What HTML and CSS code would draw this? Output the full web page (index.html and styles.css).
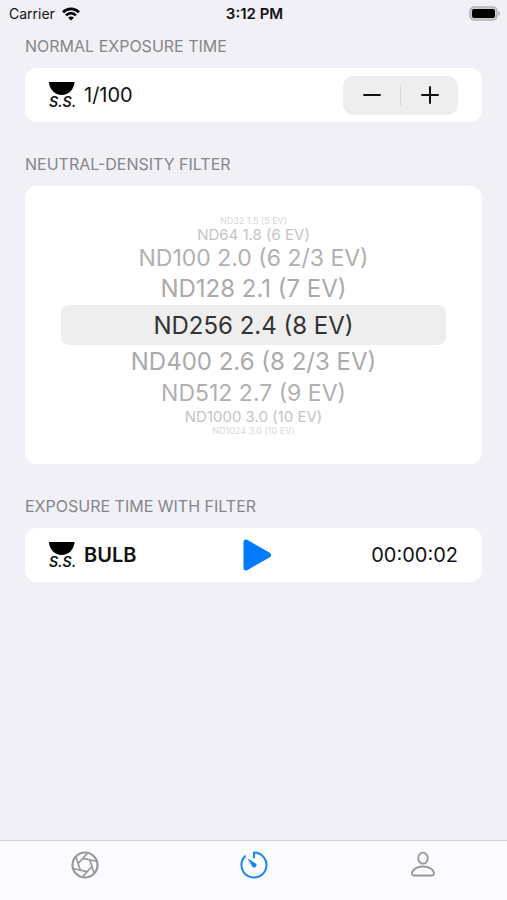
FILE: index.html
```html
<!DOCTYPE html>
<html lang="en">
<head>
    <meta charset="UTF-8">
    <meta name="viewport" content="width=device-width, initial-scale=1.0">
    <title>Exposure Timer</title>
    <link rel="stylesheet" href="styles.css">
</head>
<body>
<svg class="symbols" aria-hidden="true">
    <symbol id="shutter" viewBox="0 0 26 14">
        <path d="M0 0h25.500v1C24.500 8 19.500 13 12.700 13S1 8 0 1z"/>
    </symbol>
</svg>

<header class="status">
    <div class="carrier">
        <span>Carrier</span>
        <svg width="18" height="14" viewBox="0 0 18 14" fill="none" stroke="#000" stroke-width="2.600">
            <path d="M1 5.200c4.500-4.400 11.500-4.400 16 0"/>
            <path d="M4 8.300c2.800-2.800 7.200-2.800 10 0"/>
            <path d="M9 13.600l-2.900-2.900c1.600-1.500 4.200-1.500 5.800 0z" fill="#000" stroke="none"/>
        </svg>
    </div>
    <div class="clock">3:12 PM</div>
    <div class="battery">
        <svg width="31" height="15" viewBox="0 0 31 15">
            <rect x="1" y="1" width="27" height="13" rx="4" fill="#ccc" stroke="#b4b4b6" stroke-width="1.500"/>
            <rect x="3" y="3" width="23" height="9" rx="2"/>
            <path d="M29.500 5c2 .8 2 4.200 0 5z" fill="#aaaaad"/>
        </svg>
    </div>
</header>

<main>
    <section>
        <h2>NORMAL EXPOSURE TIME</h2>
        <div class="card row">
            <div class="value">
                <span class="ss"><svg width="26" height="14"><use href="#shutter"/></svg><i>S.S.</i></span>
                <span>1/100</span>
            </div>
            <div class="stepper">
                <button type="button" aria-label="Decrease">
                    <svg width="18" height="18" viewBox="0 0 18 18"><path d="M1 9h16"/></svg>
                </button>
                <button type="button" aria-label="Increase">
                    <svg width="18" height="18" viewBox="0 0 18 18"><path d="M1 9h16M9 1v16"/></svg>
                </button>
            </div>
        </div>
    </section>

    <section>
        <h2 id="filter">NEUTRAL-DENSITY FILTER</h2>
        <div class="card wheel" role="radiogroup" aria-labelledby="filter">
            <label class="edge"><input type="radio" name="nd">ND32 1.5 (5 EV)</label>
            <label class="far"><input type="radio" name="nd">ND64 1.8 (6 EV)</label>
            <label class="mid"><input type="radio" name="nd">ND100 2.0 (6 2/3 EV)</label>
            <label class="near"><input type="radio" name="nd">ND128 2.1 (7 EV)</label>
            <label class="selected"><input type="radio" name="nd" checked>ND256 2.4 (8 EV)</label>
            <label class="near"><input type="radio" name="nd">ND400 2.6 (8 2/3 EV)</label>
            <label class="mid"><input type="radio" name="nd">ND512 2.7 (9 EV)</label>
            <label class="far"><input type="radio" name="nd">ND1000 3.0 (10 EV)</label>
            <label class="edge"><input type="radio" name="nd">ND1024 3.0 (10 EV)</label>
        </div>
    </section>

    <section>
        <h2>EXPOSURE TIME WITH FILTER</h2>
        <div class="card row thirds">
            <div class="value bulb">
                <span class="ss"><svg width="26" height="14"><use href="#shutter"/></svg><i>S.S.</i></span>
                <span>BULB</span>
            </div>
            <button class="play" type="button" aria-label="Start timer">
                <svg width="34" height="32" viewBox="-6 0 34 32">
                    <path d="M3 3v26L25.500 16z" fill="#007aff" stroke="#007aff" stroke-width="5" stroke-linejoin="round"/>
                </svg>
            </button>
            <div class="time">00:00:02</div>
        </div>
    </section>
</main>

<nav class="tabs">
    <a href="#aperture" aria-label="Aperture">
        <svg width="28" height="28" viewBox="0 0 28 28">
            <circle cx="14" cy="14" r="12.500" stroke-width="2.200"/>
            <path transform="rotate(12 14 14)" d="M10.500 7.900h14M17.500 7.900l7 12.100M21 14l-7 12.100M17.500 20.100h-14M10.500 20.100L3.500 8M7 14L14 1.900" stroke-width="1.700"/>
        </svg>
    </a>
    <a class="active" href="#timer" aria-label="Timer">
        <svg width="28" height="28" viewBox="0 0 28 28">
            <path d="M14 6.500V1.500A12.500 12.500 0 1 1 5 5.300" stroke-width="2" stroke-linecap="round" stroke-linejoin="round"/>
            <path d="M7.300 7.300L15.800 12.400a2.300 2.300 0 1 1-3.400 3.400z" fill="currentColor" stroke="none"/>
        </svg>
    </a>
    <a href="#profile" aria-label="Profile">
        <svg width="28" height="28" viewBox="0 0 28 28">
            <ellipse cx="14" cy="7.200" rx="4.800" ry="5.500"/>
            <path d="M5 24.500c-1.400 0-2-.8-2-2 0-3.500 4.200-7 11-7s11 3.500 11 7c0 1.200-.6 2-2 2z"/>
        </svg>
    </a>
</nav>
</body>
</html>
```
FILE: styles.css
```css
* {
    box-sizing: border-box;
}
body {
    margin: 0;
    min-height: 100vh;
    display: flex;
    flex-direction: column;
    background-color: #f1f0f6;
    color: #111;
    font-family: Inter, "Liberation Sans", sans-serif;
}
svg {
    display: block;
}
button {
    border: 0;
    padding: 0;
    background: none;
    color: inherit;
    cursor: pointer;
}
.symbols {
    position: absolute;
    width: 0;
    height: 0;
}

/* status bar */
.status {
    display: grid;
    grid-template-columns: 1fr auto 1fr;
    align-items: center;
    height: 27px;
    padding: 0 7px 0 9px;
    font-size: 14px;
}
.carrier {
    display: flex;
    align-items: center;
    gap: 7px;
}
.clock {
    font-size: 15px;
    font-weight: 600;
}
.battery {
    justify-self: end;
}

/* sections */
main {
    flex: 1;
    display: flex;
    flex-direction: column;
    gap: 31px;
    padding: 8px 25px;
}
h2 {
    margin: 0 0 11px;
    font-size: 16px;
    font-weight: 400;
    line-height: 22px;
    color: #85858a;
}
.card {
    background-color: #fff;
    border-radius: 12px;
}
.row {
    display: flex;
    align-items: center;
    justify-content: space-between;
    height: 54px;
    padding: 0 24px;
    font-size: 20px;
}
.thirds {
    display: grid;
    grid-template-columns: 1fr auto 1fr;
}
.value {
    display: flex;
    align-items: center;
    gap: 9px;
}
.bulb {
    font-weight: 600;
}
.ss {
    width: 26px;
}
.ss i {
    display: block;
    font-size: 14px;
    font-weight: 600;
    line-height: 12px;
}
.time {
    text-align: right;
}

.stepper {
    display: flex;
    align-items: center;
    width: 115px;
    height: 39px;
    border-radius: 10px;
    background-color: #eee;
}
.stepper button {
    flex: 1;
    display: flex;
    justify-content: center;
    align-items: center;
    height: 22px;
}
.stepper button + button {
    border-left: 1px solid #d8d8da;
}
.stepper path {
    stroke: #111;
    stroke-width: 2;
    stroke-linecap: round;
}

/* filter wheel */
.wheel {
    display: flex;
    flex-direction: column;
    padding: 29px 36px;
    color: #aaa;
}
.wheel label {
    display: flex;
    align-items: center;
    justify-content: center;
    white-space: nowrap;
    cursor: pointer;
}
.wheel input {
    position: absolute;
    opacity: 0;
    pointer-events: none;
}
.wheel .selected {
    height: 40px;
    border-radius: 8px;
    background-color: #eee;
    color: #333;
    font-size: 24px;
}
.wheel .near {
    height: 33px;
    font-size: 24px;
}
.wheel .mid {
    height: 29px;
    font-size: 23px;
    color: #b0b0b0;
}
.wheel .far {
    height: 18px;
    font-size: 15px;
    color: #c4c4c4;
}
.wheel .edge {
    height: 10px;
    font-size: 9px;
    color: #d8d8d8;
}

/* tab bar */
.tabs {
    display: flex;
    height: 60px;
    padding-top: 10px;
    border-top: 1px solid #d2d2d6;
    background-color: #fbfbfd;
}
.tabs a {
    flex: 1;
    display: flex;
    justify-content: center;
    color: #98989c;
}
.tabs svg {
    fill: none;
    stroke: currentColor;
    stroke-width: 1.8;
}
.tabs .active {
    color: #1a86f5;
}
```
